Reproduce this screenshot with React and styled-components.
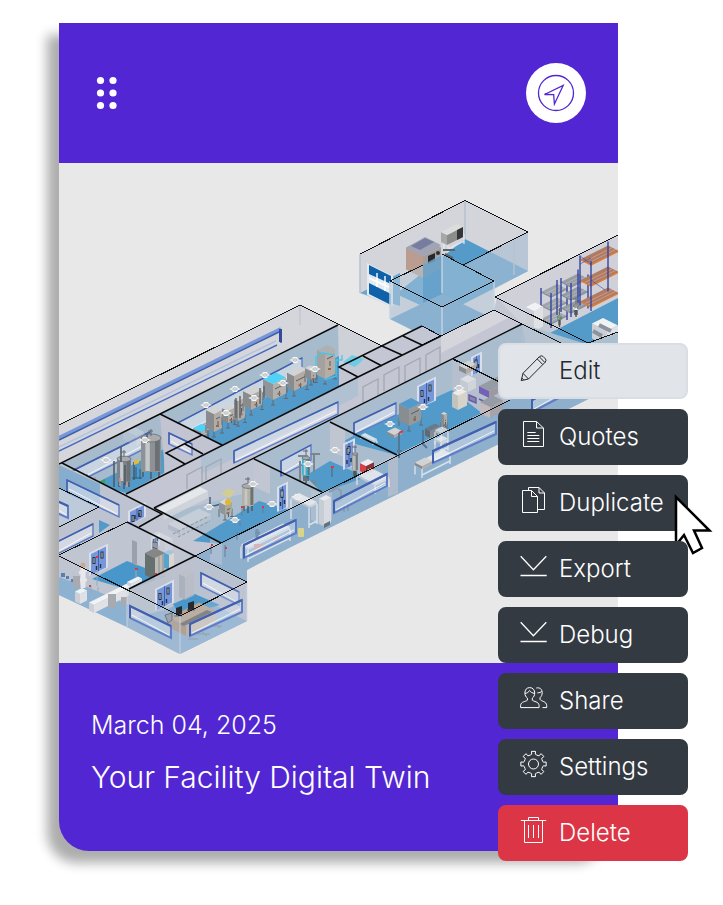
import React from 'react';
import styled, { createGlobalStyle, css } from 'styled-components';

const GlobalStyle = createGlobalStyle`
  *, *::before, *::after { box-sizing: border-box; }
  body {
    margin: 0;
    background: #ffffff;
    font-family: Inter, 'Liberation Sans', sans-serif;
    font-weight: 300;
  }
`;

const Page = styled.main`
  padding: 23px 105px 44px 59px;
`;

const Card = styled.article`
  position: relative;
  background: #5227d3;
  border-radius: 0 0 30px 30px;
  box-shadow: -12px 12px 12px #adadad;
`;

const CardHeader = styled.header`
  display: flex;
  align-items: center;
  justify-content: space-between;
  padding: 40px 32px;
`;

const DragHandle = styled.button`
  display: flex;
  padding: 4px;
  border: 0;
  background: none;
  cursor: grab;
`;

const LocateButton = styled.button`
  display: flex;
  width: 60px;
  height: 60px;
  padding: 0;
  border: 0;
  border-radius: 50%;
  background: #ffffff;
  color: #5227d3;
`;

const Scene = styled.svg`
  display: block;
  width: 100%;
  height: auto;
  background: #e8e8e8;
`;

const CardFooter = styled.footer`
  display: flex;
  flex-direction: column;
  gap: 12px;
  padding: 42px 32px 54px;
  color: #ffffff;
`;

const CardDate = styled.time`
  font-size: 25px;
  line-height: 40px;
`;

const CardTitle = styled.h2`
  margin: 0;
  font-size: 30px;
  font-weight: 300;
  line-height: 40px;
`;

const Menu = styled.ul`
  position: absolute;
  top: 320px;
  right: -70px;
  display: flex;
  flex-direction: column;
  gap: 10px;
  width: 190px;
  margin: 0;
  padding: 0;
  list-style: none;
`;

const MenuItem = styled.li`
  position: relative;
`;

const tones = {
  light: css`background: #e1e5ea; border-color: #d9dee4; color: #24282c;`,
  dark: css`background: #343a42; border-color: #343a42; color: #ffffff;`,
  danger: css`background: #dc3545; border-color: #dc3545; color: #ffffff;`,
};

const MenuButton = styled.button`
  display: flex;
  align-items: center;
  gap: 11px;
  width: 100%;
  height: 56px;
  padding: 0 0 2px 20px;
  border: 2px solid;
  border-radius: 8px;
  font: inherit;
  font-size: 24px;
  text-align: left;
  ${({ $tone }) => tones[$tone]}
`;

const Glyph = styled.svg`
  flex: none;
  width: 28px;
  height: 32px;
  fill: none;
  stroke: currentColor;
  stroke-width: 1;
`;

const Pointer = styled.svg`
  position: absolute;
  top: 16px;
  left: 174px;
  pointer-events: none;
`;

const gearPath = (() => {
  const points = [];
  for (let i = 0; i < 8; i += 1) {
    [[-0.29, 9.6], [-0.18, 10], [-0.16, 12.8], [0.16, 12.8], [0.18, 10], [0.29, 9.6]].forEach(([a, r]) => {
      const t = (i * Math.PI) / 4 + a;
      points.push(`${(13.5 + r * Math.sin(t)).toFixed(2)} ${(13 - r * Math.cos(t)).toFixed(2)}`);
    });
  }
  return `M${points.join('L')}Z`;
})();

const glyphs = {
  edit: (
    <>
      <path d="M1.2 25.6 3 18.3 19.5 1.6Q21.3 0 23 1.4L25.4 3.8Q26.8 5.4 25.2 7.2L8.5 24Z" />
      <path d="M3 18.3 8.5 24M17.2 3.9 22.8 9.6M19.3 1.8 24.9 7.500M1.9 23 3.7 24.9" />
    </>
  ),
  quotes: <path d="M3.5.5H16.5L23.5 7V25.5H3.5ZM16.5.5V7H23.5M7.3 11.5H15.7M7.3 14.5H19.3M7.3 17.5H19.3M7.3 20.5H19.3" />,
  duplicate: (
    <path d="M2.5 3.5H11.5L17.5 9.5V25.5H2.5ZM11.5 3.5V9.5H17.5M8.5 3.5V.5H19L24.5 6V22.5H17.5M19 .5V6H24.5" />
  ),
  download: <path strokeWidth="1.3" d="M.7 3.3 13.4 16.8 26.3 3.3M.5 22.5H26.7" />,
  share: (
    <>
      <path d="M9.7 2.6C6.6 2.6 4.9 4.9 4.9 8c0 2.3 1 4 2.5 5.1v2.1C6.3 16.6.6 16.4.6 20.6v2h18.5v-2c0-4.2-5.8-4-6.8-5.4v-2.1c1.5-1.1 2.4-2.8 2.4-5.1 0-3.1-1.8-5.4-5-5.4Z" />
      <path d="M5 8.3c2.2 0 3.6-1.2 4.6-2.8 1.2 1.8 2.8 2.8 5 2.8M16.3 3c3.7-.8 5.9 1.3 5.9 4.7 0 2.1-.8 3.8-2.1 4.8v2c1 1.8 6.6 1.8 6.6 6.1v2h-4.2M17.4 7.9c2 0 3.6-.7 4.5-1.6" />
    </>
  ),
  settings: (
    <>
      <path d={gearPath} />
      <circle cx="13.5" cy="13" r="5" />
    </>
  ),
  trash: <path d="M.8 3.5H26.2M8.5 3.5V.5H18.5V3.5M4.5 3.5V25.5H22.5V3.5M8.5 8V21M13.5 8V21M18.5 8V21" />,
};

const actions = [
  { label: 'Edit', glyph: 'edit', tone: 'light' },
  { label: 'Quotes', glyph: 'quotes', tone: 'dark' },
  { label: 'Duplicate', glyph: 'duplicate', tone: 'dark', hovered: true },
  { label: 'Export', glyph: 'download', tone: 'dark' },
  { label: 'Debug', glyph: 'download', tone: 'dark' },
  { label: 'Share', glyph: 'share', tone: 'dark' },
  { label: 'Settings', glyph: 'settings', tone: 'dark' },
  { label: 'Delete', glyph: 'trash', tone: 'danger' },
];

/* Window band in an isometric wall: top edge from (x1,y1) to (x2,y2), h tall. */
function Pane({ x1, y1, x2, y2, h, w = 1.4, o = 0.5 }) {
  const p = `${x1},${y1} ${x2},${y2} ${x2},${y2 + h} ${x1},${y1 + h}`;
  return (
    <g>
      <polygon points={p} fill="#e9edf5" fillOpacity={o} stroke="#5f7dc6" strokeWidth={w} />
      <path d={`M${x1} ${y1 + h}V${y1}L${x2} ${y2}`} fill="none" stroke="#4260ae" strokeWidth={w} />
      <path d={`M${x1 + 2} ${y1 + h - 3}L${x2 - 2} ${y2 + h - 3}`} stroke="#ffffff" strokeOpacity=".8" />
    </g>
  );
}

/* Door leaves climbing to the right, lower-left corner at (x,y). */
function Door({ x, y, w = 16, h = 21 }) {
  const r = w / 2;
  return (
    <g>
      <polygon points={`${x - 2},${y + 1} ${x - 2},${y - h - 1} ${x + w + 2},${y - h - r - 3} ${x + w + 2},${y - r}`} fill="#d9deea" />
      <polygon points={`${x},${y} ${x},${y - h} ${x + w},${y - h - r} ${x + w},${y - r}`} fill="#7698da" />
      <path d={`M${x + r} ${y - r / 2}v${-h}`} stroke="#3d61b1" />
      <path d={`M${x + 3} ${y - h + 3}v7M${x + w - 4} ${y - h - r + 5}v7`} stroke="#26313e" strokeWidth="3" />
      <path d={`M${x + 3} ${y - h + 4}v5M${x + w - 4} ${y - h - r + 6}v5`} stroke="#b9ccdf" />
      <path d={`M${x + r - 2} ${y - 9}v4M${x + r + 2} ${y - 11}v4`} stroke="#26313e" strokeWidth="1.4" />
    </g>
  );
}

/* Isometric box standing on its front corner (x,y). */
function Box({ x, y, a, b, h, c = ['#c8c9cb', '#96999c', '#b2b0ae'], o = 1 }) {
  return (
    <g opacity={o}>
      <polygon points={`${x},${y} ${x - b},${y - b / 2} ${x - b},${y - b / 2 - h} ${x},${y - h}`} fill={c[1]} />
      <polygon points={`${x},${y} ${x + a},${y - a / 2} ${x + a},${y - a / 2 - h} ${x},${y - h}`} fill={c[2]} />
      <polygon points={`${x},${y - h} ${x + a},${y - h - a / 2} ${x + a - b},${y - h - a / 2 - b / 2} ${x - b},${y - h - b / 2}`} fill={c[0]} />
    </g>
  );
}

function Rig({ x, y, a, b, h, c }) {
  return (
    <g>
      <path d={`M${x} ${y}v-8M${x + a} ${y - a / 2}v-8M${x - b} ${y - b / 2}v-8M${x - 2} ${y}h4M${x + a - 2} ${y - a / 2}h4`} stroke="#646a70" />
      <Box x={x} y={y - 5} a={a} b={b} h={h} c={c} />
      <path d={`M${x + 2} ${y - h}l${a - 4} ${2 - a / 2}M${x + a / 2} ${y - h + 2}v5`} stroke="#595d62" />
      <path d={`M${x + a / 2 - 2} ${y - h / 2 - a / 4}h3`} stroke="#8f6b5b" strokeWidth="2" />
    </g>
  );
}

function Tank({ x, y, w, h, c = '#8e9498' }) {
  return (
    <g>
      <path d={`M${x + 2} ${y}v-8M${x + w - 2} ${y}v-8M${x + w / 2} ${y + 2}v-8`} stroke="#50555a" strokeWidth="1.4" />
      <rect x={x} y={y - h} width={w} height={h - 5} rx="2" fill={c} />
      <rect x={x + w * 0.22} y={y - h + 1} width={w * 0.22} height={h - 7} fill="#c5c8ca" />
      <rect x={x + w * 0.7} y={y - h + 1} width={w * 0.24} height={h - 7} fill="#6c7176" />
      <ellipse cx={x + w / 2} cy={y - h} rx={w / 2} ry={w / 5} fill="#a9abad" stroke="#686d73" strokeWidth=".8" />
      <path d={`M${x + w / 2} ${y - h - 2}v-7m-3 2h5`} stroke="#646a70" />
    </g>
  );
}

function Vent({ x, y }) {
  return (
    <g>
      <path d={`M${x - 6} ${y}l3-1 1-2h4l1 2 3 1-3 1-1 2h-4l-1-2z`} fill="#f7f7f7" />
      <ellipse cx={x} cy={y} rx="2.4" ry="1.3" fill="#d7dadd" stroke="#a9adb1" strokeWidth=".6" />
    </g>
  );
}

function Bench({ x, y, a, b = 8, h = 8, o = 0.85 }) {
  return (
    <g opacity={o}>
      <path d={`M${x} ${y}v${-h}M${x + a} ${y - a / 2}v${-h}M${x - b} ${y - b / 2}v${-h}M${x} ${y - 3}l${a} ${-a / 2}`} stroke="#e7eaee" strokeWidth="1.4" />
      <Box x={x} y={y - h} a={a} b={b} h={2} c={['#eceef0', '#c7cbd1', '#d9dce0']} />
    </g>
  );
}

function Rack({ x, y, a, b, h, deck, beam, levels = 3 }) {
  return (
    <g>
      {Array.from({ length: levels }, (_, i) => {
        const ly = y - 4 - (i * (h - 8)) / (levels - 1);
        return (
          <g key={i}>
            <polygon points={`${x},${ly} ${x + a},${ly - a / 2} ${x + a - b},${ly - a / 2 - b / 2} ${x - b},${ly - b / 2}`} fill={deck} />
            <path d={`M${x - b * 0.6} ${ly - b * 0.3}l${a} ${-a / 2}M${x - b * 0.3} ${ly - b * 0.15}l${a} ${-a / 2}`} stroke="#ffffff" strokeOpacity=".25" />
            <path d={`M${x - b} ${ly - b / 2}L${x} ${ly}l${a} ${-a / 2}`} stroke={beam} strokeWidth="1.3" fill="none" />
          </g>
        );
      })}
      <path d={`M${x} ${y}v${-h}M${x - b} ${y - b / 2}v${-h}M${x + a} ${y - a / 2}v${-h}M${x + a - b} ${y - a / 2 - b / 2}v${-h}`} stroke="#3344a0" strokeWidth="1.4" />
    </g>
  );
}

const steel = ['#d2d3d4', '#898c8f', '#b3aba4'];
const cyanTop = ['#4fd2f5', '#8f9599', '#b4b1ac'];
const pale = ['#f1f2f3', '#ccd0d6', '#dfe1e4'];

function FacilityScene() {
  return (
    <Scene viewBox="59 163 559 500" role="img" aria-label="Isometric view of the facility">
      {/* detached upper room */}
      <g>
        <polygon points="360,254 465,200.500 528,232 528,271 494,289 494,319 442,345 390,319 390,306 360,293" fill="#d3d5da" />
        <polygon points="465,239 528,271 442,315 396,294" fill="#559bca" />
        <polygon points="360,293 400,273 400,306" fill="#6ba6ce" />
        <polygon points="465,265 528,232 528,271 494,289 494,281" fill="#a9bfd2" fillOpacity=".65" />
        <path d="M465 201V239M514 240V275M360 254V293" stroke="#b6c2cf" strokeWidth="1.5" />
        <Bench x={448} y={252} a={16} b={4} h={10} />
        <Box x={447} y={245} a={16} b={6} h={10} c={['#dddddb', '#a5a7a9', '#8c8c8b']} />
        <path d="M457 230l6-3v10l-6 3z" fill="#343638" />
        <Box x={423} y={278} a={18} b={17} h={22} c={['#9ea1ad', '#ba9d90', '#a29e9c']} />
        <path d="M406 248l19-11 16 8-18 11z" fill="#a1a4b5" />
        <path d="M411 246l14-8 9 4-14 8z" fill="#767d9e" />
        <path d="M428 256l7-3v8l-7 3z" fill="#26292c" />
        <circle cx="438" cy="253" r="2" fill="#2b3034" />
        <path d="M443 250h12m-10 4 8 4" stroke="#5a646e" strokeWidth="2" />
        <polygon points="367,263 393,276 393,307 367,295" fill="#e5ebf2" />
        <polygon points="369,265 391,276 391,284 369,274" fill="#0f61aa" />
        <polygon points="369,283 391,294 391,305 369,294" fill="#0f61aa" />
        <path d="M369 278l22 10M377 273v14M385 276v15" stroke="#ffffff" strokeWidth="1.4" />
        <polygon points="390,280 423,265 442,254 494,280 494,319 442,345 390,319" fill="#b6c8d9" fillOpacity=".48" />
        <polygon points="390,319 442,294 494,319 442,345" fill="#8bb1d0" />
        <polygon points="423,265 442,255 442,294 423,303" fill="#5a9bc9" fillOpacity=".7" />
        <path d="M390 281V319M442 307V345M494 281V319M442 254V293" stroke="#c7d4e2" strokeWidth="1.4" />
      </g>

      {/* main building shell */}
      <polygon points="59,425 300,305 338,325 382,346 422,326 441,336 494,310 497,297 618,235 618,384 497,445 397,494 289,548 247,570 247,621 180,654 127,627 59,595" fill="#c3c7d3" />
      <polygon points="59,425 300,305 338,325 160,414 59,464" fill="#d4d6db" />
      <path d="M300 306V325" stroke="#bdbec8" />
      <path d="M59 438 281 329" stroke="#7697d8" strokeWidth="4" />
      <path d="M59 440 281 331V343" stroke="#3e5ca8" strokeWidth="1.5" fill="none" />
      <path d="M59 447 276 341" stroke="#b1c4de" strokeWidth="1.5" />
      <path d="M59 451 277 345" stroke="#486bc1" strokeWidth="1.4" />
      <path d="M280.500 329v13" stroke="#33499c" strokeWidth="3" />
      <polygon points="338,325 382,346 339,367" fill="#cfd1d9" />

      {/* right storage hall */}
      <polygon points="495,297 618,235 618,333 586,344" fill="#d0d1d8" />
      <polygon points="550,333 618,298 618,333 586,346" fill="#559bca" />
      <polygon points="541,304 541,320 522,324 498,299" fill="#cfd1da" />
      <Rack x={551} y={328} a={16} b={10} h={35} deck="#a0a5ab" beam="#858d98" />
      <Rack x={571} y={317} a={17} b={10} h={34} deck="#979ca2" beam="#858d98" />
      <Rack x={591} y={311} a={28} b={11} h={50} deck="#b17b63" beam="#df7c35" />
      <path d="M580 256l11 8M580 264l11-6M591 280l14 10" stroke="#3344a0" strokeOpacity=".6" />
      <Tank x={557} y={325} w={5} h={8} c="#50a85b" />
      <Tank x={573} y={315} w={6} h={9} c="#eceef0" />
      <Box x={534} y={331} a={9} b={8} h={20} c={pale} />
      <Box x={607} y={346} a={11} b={15} h={15} c={pale} />
      <path d="M593 331l9 5M599 325l12 6" stroke="#8a949f" strokeWidth="4" />
      <polygon points="494,310 522,324 586,344 618,333 618,384 497,445 494,380" fill="#aabfd0" />
      <polygon points="522,324 618,372 618,384 540,423" fill="#b7c3d1" />
      <Door x={500} y={350} w={12} h={18} />

      {/* process room */}
      <polygon points="160,414 338,325 339,386 222,445" fill="#a6bccd" />
      <polygon points="194,431 339,356 339,386 222,445" fill="#529ac9" />
      <Pane x1={174} y1={425} x2={302} y2={358} h={15} />
      <g fill="#cdd9e5" fillOpacity=".45">
        <path d="M185 421l22-11v17l-22 10zM215 406l22-11v17l-22 10zM245 391l22-11v17l-22 10z" />
      </g>
      <Box x={201} y={437} a={8} b={8} h={5} c={cyanTop} />
      <Rig x={214} y={437} a={8} b={8} h={18} c={steel} />
      <Rig x={228} y={428} a={7} b={6} h={12} c={steel} />
      <Rig x={238} y={426} a={7} b={4} h={20} c={steel} />
      <Rig x={251} y={415} a={11} b={8} h={15} c={steel} />
      <Rig x={273} y={405} a={13} b={10} h={16} c={cyanTop} />
      <Rig x={294} y={396} a={13} b={7} h={15} c={steel} />
      <Rig x={311} y={385} a={5} b={6} h={9} c={steel} />
      <Rig x={325} y={384} a={10} b={8} h={25} c={['#aeb1b4', '#a4a29f', '#b7ada4']} />
      <path d="M316 374v-17l7-4 12 2M324 380l12-4v-16h6v-5" stroke="#42c8f0" strokeWidth="1.3" fill="none" />
      <polygon points="343,362 352,355 364,359 355,367" fill="#57cce9" fillOpacity=".8" />
      <path d="M236 398v20M240 396v22M260 388v16M264 386v12M208 430v12" stroke="#5b6268" strokeWidth="1.4" />
      {[[206, 405], [235, 389], [265, 375], [226, 413], [254, 398], [283, 383], [295, 360], [315, 369]].map(([x, y]) => <Vent key={x} x={x} y={y} />)}
      <polygon points="339,367 358,377 339,387" fill="#c4c7d3" />

      {/* tank room */}
      <polygon points="62,463 160,415 165,454 165,472 126,494" fill="#a7bbcd" />
      <polygon points="94,484 164,449 164,473 126,493" fill="#529ac9" />
      <polygon points="160,415 222,445 185,464 165,470" fill="#c2c4d1" />
      <Pane x1={70} y1={472} x2={150} y2={432} h={14} />
      <Pane x1={169} y1={433} x2={192} y2={444} h={11} />
      <Box x={136} y={446} a={8} b={13} h={10} c={pale} o={0.3} />
      <Tank x={117} y={487} w={14} h={28} c="#7d8489" />
      <Tank x={141} y={477} w={20} h={39} c="#8d9296" />
      <path d="M121 462v-15M125 485v-20M134 480v-18M114 487v-26M147 443v-9" stroke="#4c5860" strokeWidth="1.5" />
      <path d="M134 461l5-2v4l-5 2z" fill="#e3bd2f" />
      <path d="M136 467v11m4-9v10M132 478h10" stroke="#2e5878" />
      <path d="M99 482l6-3v4z" fill="#33a44b" />
      <path d="M85 480h10m-8-6v14m8-11v14M120 478v8m7-4v5" stroke="#c79496" strokeWidth="1.5" />
      <Vent x={106} y={460} />
      <Vent x={145} y={440} />

      {/* corridors */}
      <polygon points="126,494 222,445 441,336 494,310 522,324 154,508 139,527" fill="#c4c7d3" />
      <polygon points="222,445 358,377 358,396 250,451 201,474 201,456" fill="#adbfd0" fillOpacity=".85" />
      <polygon points="441,336 494,310 510,317 441,353" fill="#d4d6dc" />
      <Pane x1={234} y1={451} x2={338} y2={402} h={12} />
      <g fill="none" stroke="#a3a8b0" strokeWidth="1.3">
        <path d="M363 403V387l15-8v17M384 391V375l15-8v17M405 382V366l15-8v17M426 371V355l14-8v17M187 489V475l15-8v17M206 480V467l15-8v17" />
      </g>

      {/* front row of rooms */}
      <polygon points="154,508 522,324 522,394 396,455 220,543" fill="#a9bdcf" />
      <polygon points="254,459 254,491 165,514 154,508" fill="#bec4d1" />
      <polygon points="195,556 289,510 510,400 618,350 618,384 497,445 289,548 247,570 247,582" fill="#8fb0cd" />
      <polygon points="193,541 259,501 289,510 221,544" fill="#529ac9" />
      <polygon points="305,476 330,461 366,477 322,493" fill="#529ac9" />
      <polygon points="344,441 362,431 452,390 482,413 396,455" fill="#529ac9" />
      <polygon points="254,459 270,467 270,494 254,487" fill="#c2c6d2" />
      <polygon points="330,422 345,430 345,457 330,452" fill="#c0c5d2" />
      <polygon points="452,360 510,387 510,400 482,413 452,390" fill="#b5bfcd" />
      <polygon points="388,458 398,454 398,493 388,497" fill="#bac2ce" fillOpacity=".7" />
      <polygon points="210,538 222,543 222,565 210,562" fill="#bac5d3" fillOpacity=".6" />
      <polygon points="311,490 322,492 332,488 332,520 322,526 311,520" fill="#bdc7d3" fillOpacity=".6" />

      <Box x={164} y={520} a={44} b={8} h={7} c={['#f3f3f4', '#c7cbd3', '#d5d8de']} o={0.75} />
      <Box x={180} y={535} a={31} b={12} h={5} c={['#d1d5dc', '#aab5c4', '#bdc6d0']} o={0.7} />
      <path d="M173 534l34-17M178 537l32-16" stroke="#8993a3" strokeDasharray="3 2" />
      <path d="M210 497v10l11-3" stroke="#45617b" strokeWidth="1.5" fill="none" />
      <Rig x={225} y={520} a={7} b={6} h={10} c={['#d6d9d9', '#8c969c', '#aaa89d']} />
      <circle cx="228" cy="502" r="3" fill="#e3b82d" />
      <path d="M221 494l7-6 7 3-5 7z" fill="#d5cf87" fillOpacity=".8" />
      <Tank x={242} y={511} w={12} h={25} c="#b2b1a5" />
      <Door x={279} y={511} w={7} h={23} />
      {[[209, 507], [235, 520], [253, 484], [272, 504], [297, 497]].map(([x, y]) => <Vent key={x} x={x} y={y} />)}
      <path d="M242 508v8M263 507v6M211 546v8M225 545v12M237 532v8M240 520v6" stroke="#617f9c" />
      <path d="M241 507h2M262 507h2M211 545h2M225 548h2" stroke="#d43e43" strokeWidth="2" />

      <Pane x1={281} y1={461} x2={311} y2={445} h={15} />
      <Tank x={302} y={481} w={8} h={23} c="#3bb1d6" />
      <path d="M300 461v21M314 454v18M298 456h10M310 454h10M312 480l5 5" stroke="#7b868f" strokeWidth="2" />
      <Door x={345} y={469} w={8} h={24} />
      <Tank x={352} y={476} w={6} h={22} c="#a0a4a5" />
      <Box x={366} y={474} a={8} b={6} h={8} c={['#eeeeee', '#d54146', '#873337']} />
      <path d="M332 468v9" stroke="#4f6374" />
      <path d="M331 467h3" stroke="#d43e43" strokeWidth="2" />
      <Bench x={375} y={494} a={14} b={18} h={8} />
      <Bench x={309} y={528} a={8} b={18} h={20} />
      <Box x={324} y={526} a={7} b={5} h={25} c={pale} o={0.85} />
      <path d="M324 524l6-3v4l-6 3z" fill="#65717b" />
      <path d="M329 492l8-4 4 3v8M333 503l9-4M344 506v6M348 503v8" stroke="#8b9cad" strokeWidth="2" fill="none" />
      <Vent x={308} y={464} />
      <Vent x={335} y={450} />

      <Pane x1={354} y1={423} x2={396} y2={403} h={12} />
      <Door x={419} y={408} w={15} h={21} />
      <Rig x={409} y={431} a={12} b={10} h={17} c={['#529ac9', '#888d91', '#96999a']} />
      <Rig x={444} y={432} a={3} b={3} h={12} c={steel} />
      <Box x={394} y={438} a={8} b={7} h={3} c={steel} />
      <Box x={430} y={438} a={10} b={5} h={7} c={['#6b7a8a', '#626970', '#838c95']} />
      <Box x={458} y={410} a={9} b={6} h={14} c={['#eeebe4', '#c2c2bf', '#d7d3cb']} />
      <path d="M399 433v25m-2-7h5M423 430v14l4 4" stroke="#547894" strokeWidth="2" fill="none" />
      <path d="M399 433l4-2" stroke="#d43e43" strokeWidth="2" />
      <Door x={473} y={375} w={7} h={17} />
      <Box x={466} y={374} a={10} b={7} h={5} c={steel} />
      <Box x={468} y={392} a={8} b={8} h={9} c={pale} o={0.65} />
      <Box x={489} y={398} a={19} b={10} h={7} c={['#969ca5', '#7460b6', '#9d99a2']} />
      <path d="M469 395l7 3v5l-7-3zM479 399l22 10" stroke="#6859ac" strokeWidth="1.4" fill="#8a86a8" />
      <Box x={490} y={418} a={13} b={10} h={11} c={['#969ca5', '#c4b9be', '#a6a3ab']} />
      <Bench x={373} y={445} a={4} b={12} h={2} />
      {[[390, 424], [423, 407], [459, 388]].map(([x, y]) => <Vent key={x} x={x} y={y} />)}
      <Bench x={422} y={478} a={28} b={7} h={9} />
      <Box x={422} y={469} a={10} b={7} h={3} c={steel} />
      <Bench x={441} y={454} a={7} b={6} h={19} o={0.75} />
      <Bench x={441} y={447} a={7} b={6} h={3} o={0.8} />
      <Bench x={248} y={562} a={42} b={7} h={12} />
      <path d="M254 544h9v7h-9zM273 537h6v4h-6z" fill="#c39a9d" />
      <path d="M257 529v10m-2-6h5" stroke="#7593b1" strokeWidth="3" />
      <rect x="298" y="528" width="6" height="9" rx="1" fill="#d9d588" />
      <Pane x1={334} y1={501} x2={387} y2={474} h={12} w={2} o={0.35} />
      <Pane x1={433} y1={451} x2={496} y2={422} h={12} w={2} o={0.35} />
      <Pane x1={244} y1={545} x2={296} y2={520} h={13} w={2} o={0.35} />
      <Pane x1={532} y1={400} x2={580} y2={375} h={12} w={2} o={0.35} />

      {/* left annex */}
      <polygon points="59,464 125,494 162,514 139,527 127,522 59,555" fill="#bdc3d0" />
      <polygon points="59,465 100,484 100,506 59,488" fill="#86adce" />
      <polygon points="99,520 110,525 99,533" fill="#529ac9" />
      <polygon points="59,489 99,507 59,526" fill="#bccad9" />
      <Pane x1={67} y1={480} x2={119} y2={505} h={12} />
      <Pane x1={55} y1={500} x2={68} y2={506} h={12} w={2} />
      <Pane x1={55} y1={543} x2={93} y2={524} h={12} />
      <Door x={130} y={524} w={14} h={12} />

      {/* front offices */}
      <polygon points="59,556 127,522 195,556 195,590 129,627 59,595" fill="#c0c5d2" />
      <polygon points="92,579 127,561 166,576 129,590" fill="#4997ca" />
      <polygon points="59,577 90,588 129,605 129,628 59,595" fill="#8db2d1" />
      <Door x={91} y={575} w={15} h={21} />
      <path d="M132 540l5 2v24l-5-3z" fill="#9aa1ad" />
      <Door x={153} y={548} w={5} h={9} />
      <Box x={165} y={553} a={8} b={15} h={10} c={pale} o={0.35} />
      <Box x={155} y={580} a={10} b={10} h={22} c={['#858685', '#66716f', '#bdbbb7']} />
      <path d="M159 577v-21M163 575v-21" stroke="#8b8d8c" />
      <Box x={169} y={570} a={5} b={5} h={15} c={['#9fc4dc', '#53a5d0', '#ddd6cf']} />
      <Box x={94} y={613} a={38} b={5} h={8} c={pale} />
      <Box x={131} y={587} a={11} b={4} h={3} c={pale} />
      <Box x={80} y={604} a={7} b={5} h={10} c={pale} />
      <path d="M83 568v20" stroke="#e8e8ec" strokeWidth="5" />
      <path d="M79 573l8-3M79 580h8" stroke="#e8e8ec" strokeWidth="3" />
      <circle cx="83" cy="565" r="2.500" fill="#cba894" />
      <path d="M73 576h7v12h-7zM108 594h8v14h-8zM121 597h6v9h-6z" fill="#a7aab0" />
      <path d="M61 573h4v4h-4zM66 576h3v3h-3zM71 579h2v3h-2" fill="#587fb4" />
      <path d="M97 570v16M136 568v9M91 586v6h7v-5" stroke="#9aabb9" fill="none" />
      <path d="M96 557h2M135 569h3M155 574h2M89 586h2" stroke="#d43e43" strokeWidth="2" />

      <polygon points="129,589 195,556 247,582 247,621 180,654 127,627" fill="#bac1ce" fillOpacity=".85" />
      <polygon points="127,620 168,609 194,595 247,621 180,654 127,627" fill="#8db0d0" />
      <polygon points="173,604 195,594 220,605 180,616" fill="#4997ca" />
      <Box x={185} y={600} a={9} b={6} h={23} c={['#bfc0c6', '#a7acb7', '#b7bbc5']} o={0.7} />
      <Door x={157} y={610} w={15} h={20} />
      <Pane x1={201} y1={573} x2={239} y2={592} h={13} />
      <Box x={186} y={636} a={30} b={17} h={10} c={['#b8a28d', '#a98f7c', '#bca894']} />
      <path d="M179 624l28-14 5 2-28 14z" fill="#6a6967" />
      <path d="M176 608l6-2v8l-6 2zM188 603l6-2v8l-6 2z" fill="#26292d" />
      <path d="M165 615l7-2v7l-4 3zM174 616h8m5-6h8" stroke="#3b3f44" fill="#888d92" />
      <path d="M197 634h13m-9-3 6 5M212 626h10m-7-3 5 5M188 639h10" stroke="#8a8e8b" />
      <polygon points="129,589 180,616 180,654 127,627" fill="#bbc8d8" fillOpacity=".4" />
      <polygon points="180,616 247,582 247,621 180,654" fill="#c2cedd" fillOpacity=".28" />
      <Pane x1={130} y1={606} x2={171} y2={626} h={12} w={2} o={0.35} />
      <Pane x1={190} y1={624} x2={242} y2={600} h={12} w={2} o={0.35} />
      <path d="M180 616V654M127 590V627M247 583V621" stroke="#d0d8e3" strokeOpacity=".8" />

      {/* wall-top outlines */}
      <g fill="none" stroke="#101214" shapeRendering="crispEdges">
        <path d="M360 254 465 200.500 528 232 463 265 442 254" strokeWidth="1" />
        <path d="M423 265 390 281 442 307 494 281 463 265" strokeWidth="1" />
        <path d="M59 425 300 305 382 346M422 326 441 336 494 310 522 324 584 354M618 235 495 297 588 343 618 332" strokeWidth="1" />
        <path d="M195 556 510 400M59 488 99 507 59 527M59 555 127 522M59 556 180 616 247 582 195 556" strokeWidth="1" />
        <path d="M453 359 510 387M441 336 422 345" strokeWidth="1.400" />
      </g>
      <g fill="none" stroke="#090b0c" strokeWidth="1.500">
        <path d="M59 464 160 414 338 325M62 463 162 514 139 527M160 414 222 445M126 494 358 377 441 336M358 377 339 367 422 326M363 356 382 366M382 346 402 355M403 336 422 345" />
        <path d="M202 435 166 453 185 464M185 444 203 454M154 508 522 324M154 508 221 543M254 459 322 492M330 422 397 455M127 522 195 556 129 589" />
      </g>
    </Scene>
  );
}

export default function App() {
  return (
    <>
      <GlobalStyle />
      <Page>
        <Card>
          <CardHeader>
            <DragHandle aria-label="Move card">
              <svg width="24" height="36" viewBox="0 0 24 36" fill="#ffffff">
                {[5.5, 18, 30.5].map((y) => (
                  <React.Fragment key={y}>
                    <circle cx="5.500" cy={y} r="3.600" />
                    <circle cx="18" cy={y} r="3.600" />
                  </React.Fragment>
                ))}
              </svg>
            </DragHandle>
            <LocateButton aria-label="Open facility">
              <svg width="60" height="60" viewBox="0 0 60 60" fill="none" stroke="currentColor" strokeWidth="1.300">
                <circle cx="30" cy="30" r="17.500" />
                <path d="M18.500 31.500 37.200 22.500 28.400 41 27.700 31.700Z" />
              </svg>
            </LocateButton>
          </CardHeader>
          <FacilityScene />
          <CardFooter>
            <CardDate dateTime="2025-03-04">March 04, 2025</CardDate>
            <CardTitle>Your Facility Digital Twin</CardTitle>
          </CardFooter>
          <Menu>
            {actions.map(({ label, glyph, tone, hovered }) => (
              <MenuItem key={label}>
                <MenuButton $tone={tone}>
                  <Glyph viewBox="0 -1 28 32" aria-hidden="true">{glyphs[glyph]}</Glyph>
                  {label}
                </MenuButton>
                {hovered && (
                  <Pointer width="42" height="64" viewBox="0 0 42 64" aria-hidden="true">
                    <path d="M4 6V54L12 44 21 62 30 57 22 39.500H37.500Z" fill="#ffffff" stroke="#000000" strokeWidth="2.500" />
                  </Pointer>
                )}
              </MenuItem>
            ))}
          </Menu>
        </Card>
      </Page>
    </>
  );
}
